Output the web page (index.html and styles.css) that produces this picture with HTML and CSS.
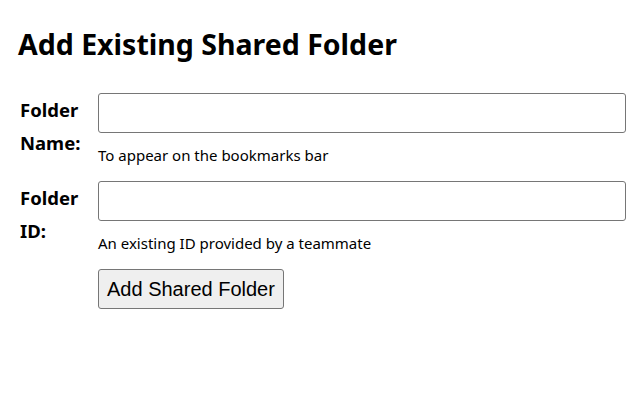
FILE: index.html
```html
<!DOCTYPE html>
<html>
<head>
<meta charset="utf-8">
<link rel="stylesheet" href="styles.css">
</head>
<body>
<div class="page">
  <h1 class="title">Add Existing Shared Folder</h1>
  <form class="form">
    <label class="label" for="name">Folder Name:</label>
    <div class="field">
      <input class="input" id="name" type="text">
      <div class="help">To appear on the bookmarks bar</div>
    </div>
    <label class="label" for="fid">Folder ID:</label>
    <div class="field">
      <input class="input" id="fid" type="text">
      <div class="help">An existing ID provided by a teammate</div>
    </div>
    <div></div>
    <div class="field">
      <button class="button" type="button">Add Shared Folder</button>
    </div>
  </form>
</div>
</body>
</html>
```
FILE: styles.css
```css
html, body {
  margin: 0;
  padding: 0;
  background: #ffffff;
}
.page {
  padding: 26px 14px 0 18px;
  font-family: "Noto Sans", "Open Sans", sans-serif;
  color: #000;
}
.title {
  margin: 0 0 31px 0;
  font-size: 28.5px;
  font-weight: 700;
  line-height: 36px;
}
.form {
  display: grid;
  grid-template-columns: 80px 1fr;
  row-gap: 16px;
}
.label {
  font-size: 18.5px;
  font-weight: 700;
  line-height: 33px;
  padding-left: 2px;
  width: 60px;
}
.field {
  display: flex;
  flex-direction: column;
  align-items: flex-start;
}
.input {
  box-sizing: border-box;
  width: 100%;
  height: 40px;
  border: 1px solid #767676;
  border-radius: 3px;
  margin: 0;
  padding: 0 8px;
  font-size: 16px;
}
.help {
  font-size: 15px;
  line-height: 20px;
  margin-top: 12px;
}
.button {
  box-sizing: border-box;
  height: 40px;
  padding: 0 8px;
  font-family: "Liberation Sans", Arial, sans-serif;
  font-size: 20px;
  background: #efefef;
  border: 1px solid #767676;
  border-radius: 3px;
  color: #000;
}
```
